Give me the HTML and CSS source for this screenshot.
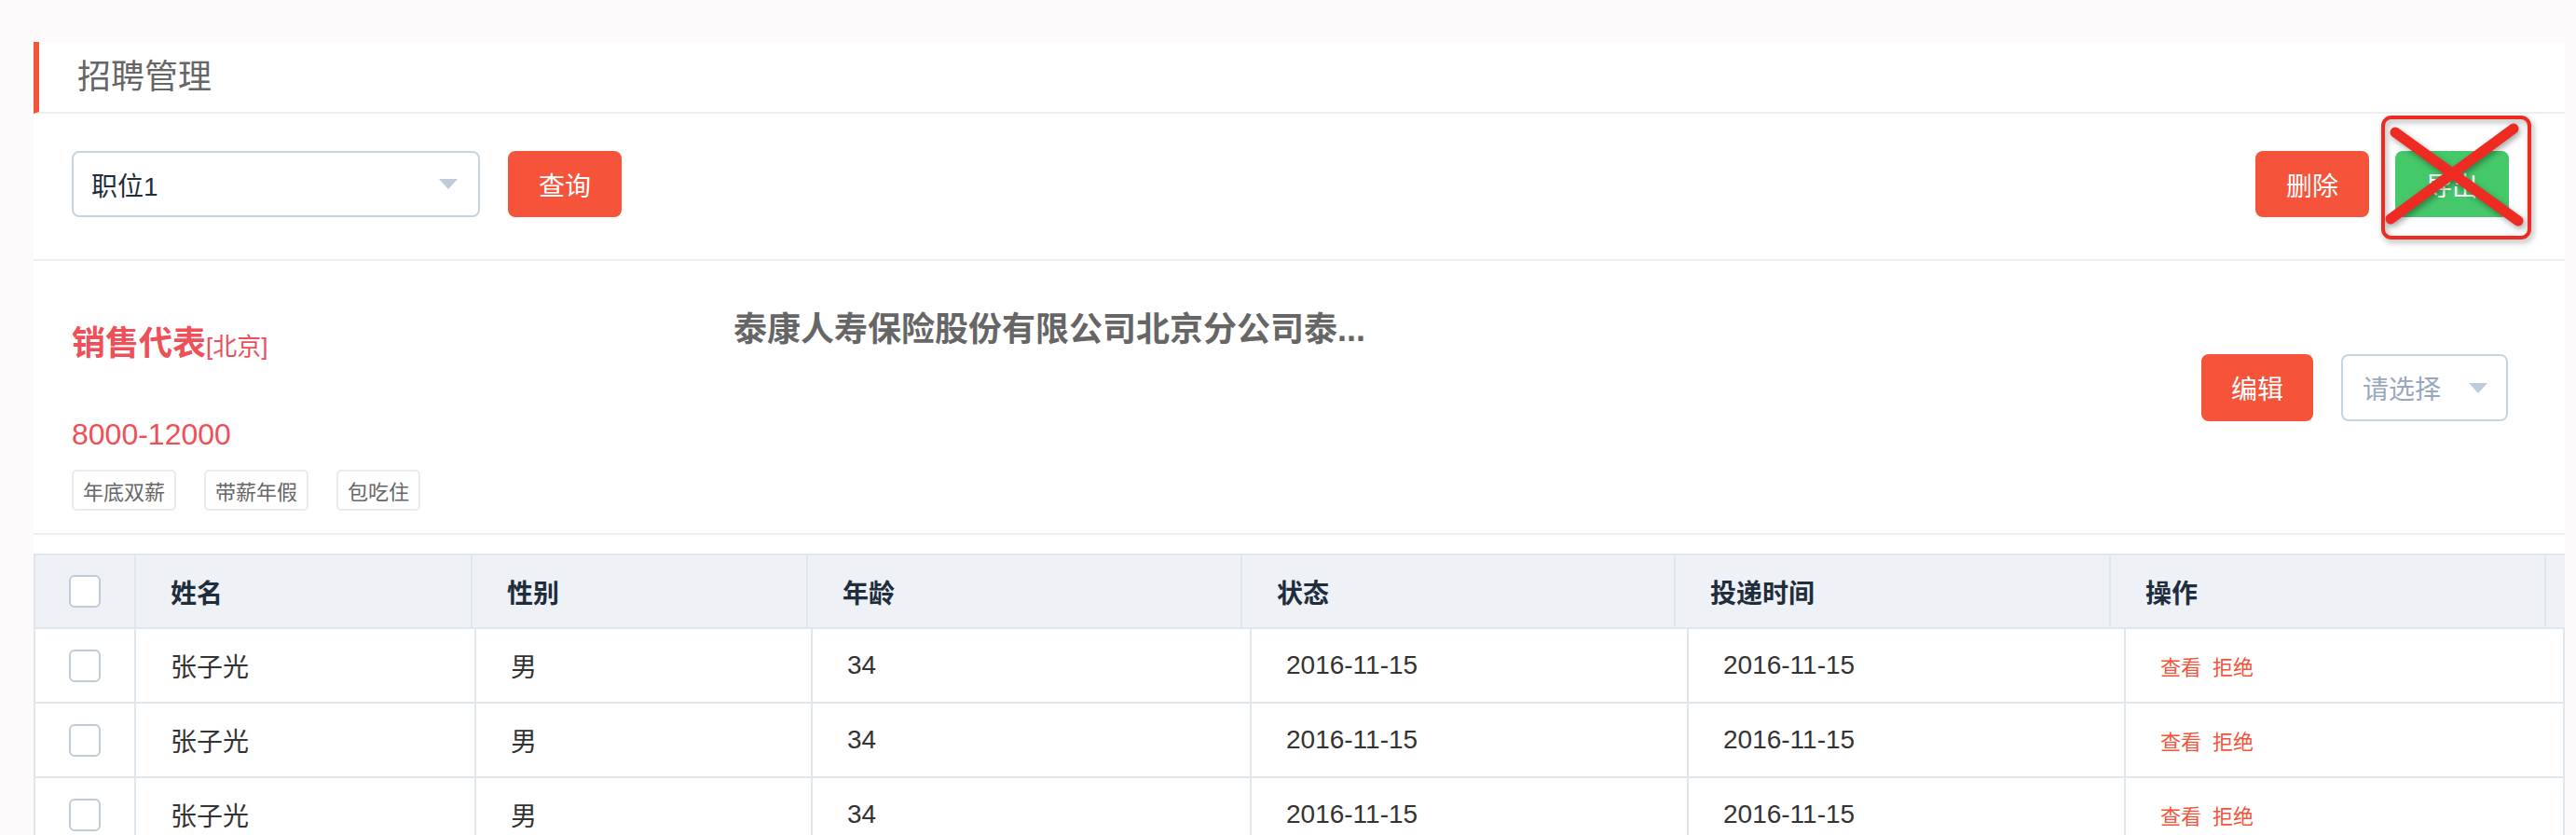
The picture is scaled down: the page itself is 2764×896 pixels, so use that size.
FILE: index.html
```html
<!DOCTYPE html>
<html lang="zh-CN">
<head>
<meta charset="utf-8">
<title>招聘管理</title>
<link rel="stylesheet" href="styles.css">
</head>
<body>
<div class="page">
  <div class="card">
    <div class="card-head">
      <span class="card-title">招聘管理</span>
    </div>

    <div class="filter-row">
      <div class="select select-wide">
        <span class="select-value">职位1</span>
        <span class="caret"></span>
      </div>
      <button class="btn btn-primary btn-query">查询</button>
      <div class="filter-actions">
        <button class="btn btn-primary">删除</button>
        <div class="export-wrap">
          <button class="btn btn-green">导出</button>
          <svg class="x-mark" width="161" height="133" viewBox="0 0 161 133">
            <rect x="2" y="2" width="157" height="129" rx="9" fill="none" stroke="#ee2b22" stroke-width="4"/>
            <line x1="15" y1="18" x2="147" y2="113" stroke="#ee2b22" stroke-width="11" stroke-linecap="round"/>
            <line x1="142" y1="14" x2="10" y2="111" stroke="#ee2b22" stroke-width="11" stroke-linecap="round"/>
          </svg>
        </div>
      </div>
    </div>

    <div class="job">
      <div class="job-main">
        <div class="job-title">销售代表<span class="job-city">[北京]</span></div>
        <div class="job-salary">8000-12000</div>
        <div class="job-tags">
          <span class="tag">年底双薪</span>
          <span class="tag">带薪年假</span>
          <span class="tag">包吃住</span>
        </div>
      </div>
      <div class="job-company">泰康人寿保险股份有限公司北京分公司泰...</div>
      <div class="job-actions">
        <button class="btn btn-primary btn-edit">编辑</button>
        <div class="select select-small">
          <span class="select-placeholder">请选择</span>
          <span class="caret"></span>
        </div>
      </div>
    </div>

    <div class="table">
      <div class="thead">
        <div class="th th-check"><span class="checkbox"></span></div>
        <div class="th">姓名</div>
        <div class="th">性别</div>
        <div class="th">年龄</div>
        <div class="th">状态</div>
        <div class="th">投递时间</div>
        <div class="th">操作</div>
        <div class="th th-gutter"></div>
      </div>
      <div class="tr">
        <div class="td td-check"><span class="checkbox"></span></div>
        <div class="td">张子光</div>
        <div class="td">男</div>
        <div class="td">34</div>
        <div class="td">2016-11-15</div>
        <div class="td">2016-11-15</div>
        <div class="td"><span class="op">查看</span><span class="op">拒绝</span></div>
      </div>
      <div class="tr">
        <div class="td td-check"><span class="checkbox"></span></div>
        <div class="td">张子光</div>
        <div class="td">男</div>
        <div class="td">34</div>
        <div class="td">2016-11-15</div>
        <div class="td">2016-11-15</div>
        <div class="td"><span class="op">查看</span><span class="op">拒绝</span></div>
      </div>
      <div class="tr">
        <div class="td td-check"><span class="checkbox"></span></div>
        <div class="td">张子光</div>
        <div class="td">男</div>
        <div class="td">34</div>
        <div class="td">2016-11-15</div>
        <div class="td">2016-11-15</div>
        <div class="td"><span class="op">查看</span><span class="op">拒绝</span></div>
      </div>
    </div>
  </div>
</div>
</body>
</html>
```

FILE: styles.css
```css
* { box-sizing: border-box; }

html, body { margin: 0; padding: 0; }

body {
  background: #fcfafa;
  font-family: "Liberation Sans", "Noto Sans CJK SC", sans-serif;
  color: #333;
  overflow: hidden;
}

.page {
  padding: 45px 12px 0 36px;
}

.card {
  background: #fff;
  min-height: 900px;
}

/* header */
.card-head {
  height: 77px;
  border-left: 6px solid #f5543a;
  border-bottom: 2px solid #eeeeee;
  padding-left: 41px;
  display: flex;
  align-items: center;
}

.card-title {
  font-size: 36px;
  line-height: 1;
  color: #666;
}

/* filter row */
.filter-row {
  height: 158px;
  padding: 40px 60px 0 41px;
  border-bottom: 2px solid #eeeeee;
  display: flex;
  align-items: flex-start;
}

.select {
  height: 71px;
  border: 2px solid #c9d3de;
  border-radius: 8px;
  background: #fff;
  display: flex;
  align-items: center;
  justify-content: space-between;
}

.select-wide {
  width: 438px;
  padding: 0 22px 0 19px;
}

.select-small {
  width: 179px;
  height: 72px;
  padding: 0 20px 0 21px;
}

.select-value {
  font-size: 28px;
  color: #1f2d3d;
}

.select-placeholder {
  font-size: 28px;
  color: #97a8be;
}

.caret {
  width: 0;
  height: 0;
  border-left: 10px solid transparent;
  border-right: 10px solid transparent;
  border-top: 11px solid #bfcbd9;
}

.btn {
  width: 122px;
  height: 71px;
  border: none;
  border-radius: 8px;
  font-family: inherit;
  font-size: 28px;
  color: #fff;
  padding: 0;
  display: flex;
  align-items: center;
  justify-content: center;
}

.btn-primary { background: #f5543a; }
.btn-green { background: #45c86a; }

.btn-query { margin-left: 30px; }

.filter-actions {
  margin-left: auto;
  display: flex;
  gap: 28px;
}

.export-wrap {
  position: relative;
}

.x-mark {
  position: absolute;
  left: -15px;
  top: -38px;
  filter: drop-shadow(2px 3px 3px rgba(0, 0, 0, 0.35));
}

/* job info */
.job {
  height: 294px;
  padding: 0 61px 0 41px;
  border-bottom: 2px solid #eeeeee;
  display: flex;
  align-items: flex-start;
}

.job-main {
  width: 710px;
  padding-top: 71px;
}

.job-title {
  font-size: 36px;
  line-height: 36px;
  font-weight: bold;
  color: #ef4f58;
}

.job-city {
  font-size: 26px;
  font-weight: normal;
}

.job-salary {
  margin-top: 60px;
  font-size: 32px;
  line-height: 32px;
  color: #ef4f58;
}

.job-tags {
  margin-top: 22px;
  display: flex;
  gap: 30px;
}

.tag {
  height: 44px;
  padding: 0 10px;
  border: 2px solid #ebebeb;
  border-radius: 5px;
  font-size: 22px;
  color: #666;
  display: flex;
  align-items: center;
}

.job-company {
  flex: 1;
  padding-top: 56px;
  font-size: 36px;
  line-height: 36px;
  font-weight: bold;
  color: #666;
  white-space: nowrap;
}

.job-actions {
  margin-top: 100px;
  display: flex;
  gap: 30px;
}

.btn-edit {
  width: 120px;
  height: 72px;
}

/* table */
.table {
  margin-top: 20px;
  border-left: 2px solid #dfe6ec;
}

.thead {
  display: grid;
  grid-template-columns: 108px 361px 360px 466px 465px 467px 467px 20px;
  background: #eef1f6;
  border-top: 2px solid #dfe6ec;
  border-bottom: 2px solid #dfe6ec;
  height: 81px;
}

.th {
  border-right: 2px solid #dfe6ec;
  padding-left: 37px;
  font-size: 28px;
  font-weight: bold;
  color: #1f2d3d;
  display: flex;
  align-items: center;
}

.th-gutter {
  padding: 0;
  border-right: none;
}

.tr {
  display: grid;
  grid-template-columns: 108px 365px 361px 471px 469px 469px 471px;
  height: 80px;
  border-bottom: 2px solid #dfe6ec;
}

.td {
  border-right: 2px solid #dfe6ec;
  padding-left: 37px;
  font-size: 28px;
  color: #333;
  display: flex;
  align-items: center;
}

.th-check, .td-check {
  padding-left: 0;
  justify-content: center;
}

.checkbox {
  width: 34px;
  height: 35px;
  border: 2px solid #bfcbd9;
  border-radius: 6px;
  background: #fff;
}

.op {
  font-size: 22px;
  color: #f5543a;
  margin-right: 12px;
}
```
